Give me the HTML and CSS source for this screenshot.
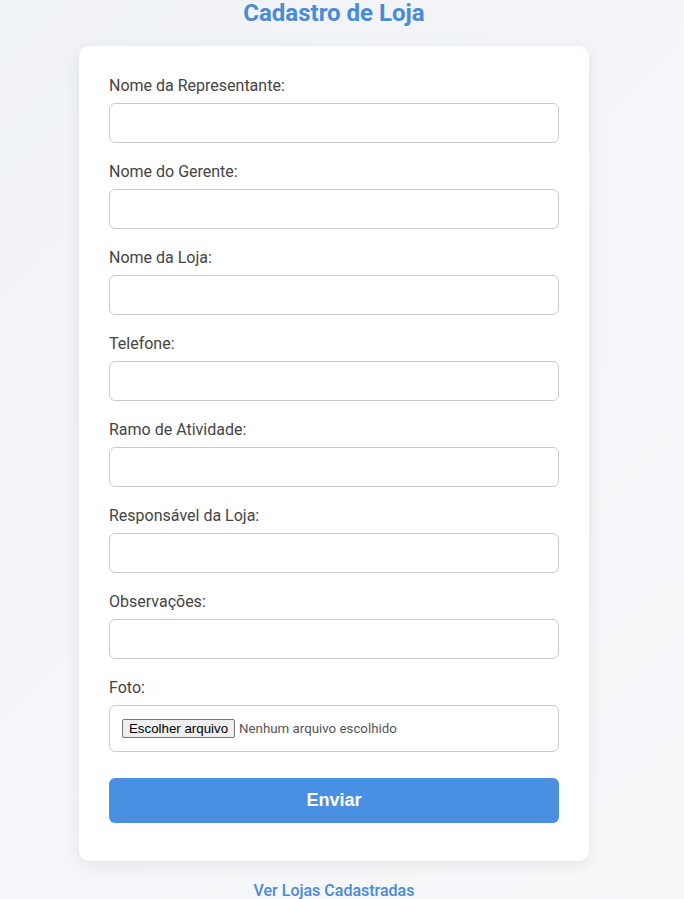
FILE: index.html
```html
<!DOCTYPE html>
<html lang="pt-BR">
<head>
<meta charset="utf-8">
<title>Cadastro de Loja</title>
<link rel="stylesheet" href="styles.css">
</head>
<body>
<div class="page">
  <h1 class="title">Cadastro de Loja</h1>
  <form class="card">
    <div class="field"><label>Nome da Representante:</label><input type="text" class="input"></div>
    <div class="field"><label>Nome do Gerente:</label><input type="text" class="input"></div>
    <div class="field"><label>Nome da Loja:</label><input type="text" class="input"></div>
    <div class="field"><label>Telefone:</label><input type="text" class="input"></div>
    <div class="field"><label>Ramo de Atividade:</label><input type="text" class="input"></div>
    <div class="field"><label>Responsável da Loja:</label><input type="text" class="input"></div>
    <div class="field"><label>Observações:</label><input type="text" class="input"></div>
    <div class="field"><label>Foto:</label><div class="input file"><span class="file-btn">Escolher arquivo</span><span class="file-text">Nenhum arquivo escolhido</span></div></div>
    <button type="button" class="submit">Enviar</button>
  </form>
  <a class="link" href="#">Ver Lojas Cadastradas</a>
</div>
</body>
</html>
```
FILE: styles.css
```css
html { background: #eef2f6; }
body {
  margin: 0;
  padding: 0 16px 0 0;
  font-family: Roboto, "Noto Sans", sans-serif;
  background: linear-gradient(135deg, #f0f3f6 0%, #f7f8fa 100%);
  min-height: 888px;
}
.page {
  display: flex;
  flex-direction: column;
  align-items: center;
}
.title {
  margin: 0;
  height: 46px;
  line-height: 26px;
  font-size: 24px;
  font-weight: 700;
  color: #4a8ad8;
}
.card {
  width: 450px;
  background: #fff;
  border-radius: 10px;
  padding: 30px 30px 38px;
  box-shadow: 0 4px 16px rgba(0,0,0,0.08);
  display: flex;
  flex-direction: column;
}
.field {
  display: flex;
  flex-direction: column;
  margin-bottom: 19px;
}
.field label {
  font-size: 16px;
  line-height: 19px;
  font-weight: 400;
  color: #444444;
  margin-bottom: 8px;
}
.input {
  box-sizing: border-box;
  height: 40px;
  border: 1px solid #cccccc;
  border-radius: 6px;
  background: #fff;
  font: inherit;
}
.file {
  height: 47px;
  display: flex;
  align-items: center;
  padding: 0 12px;
  font-size: 13.3px;
}
.file-btn {
  font-family: "Liberation Sans", Arial, sans-serif;
  border: 1px solid #767676;
  background: #efefef;
  border-radius: 2px;
  padding: 1px 6px;
  color: #000;
  margin-right: 4px;
}
.file-text { color: #555; }
.submit {
  margin-top: 7px;
  height: 45px;
  border: none;
  border-radius: 6px;
  background: #4a90e2;
  color: #fff;
  font-family: "Liberation Sans", Arial, sans-serif;
  font-weight: 700;
  font-size: 18px;
}
.link {
  margin-top: 20px;
  color: #4a8ad8;
  font-size: 16px;
  font-weight: 500;
  text-decoration: none;
}
```
